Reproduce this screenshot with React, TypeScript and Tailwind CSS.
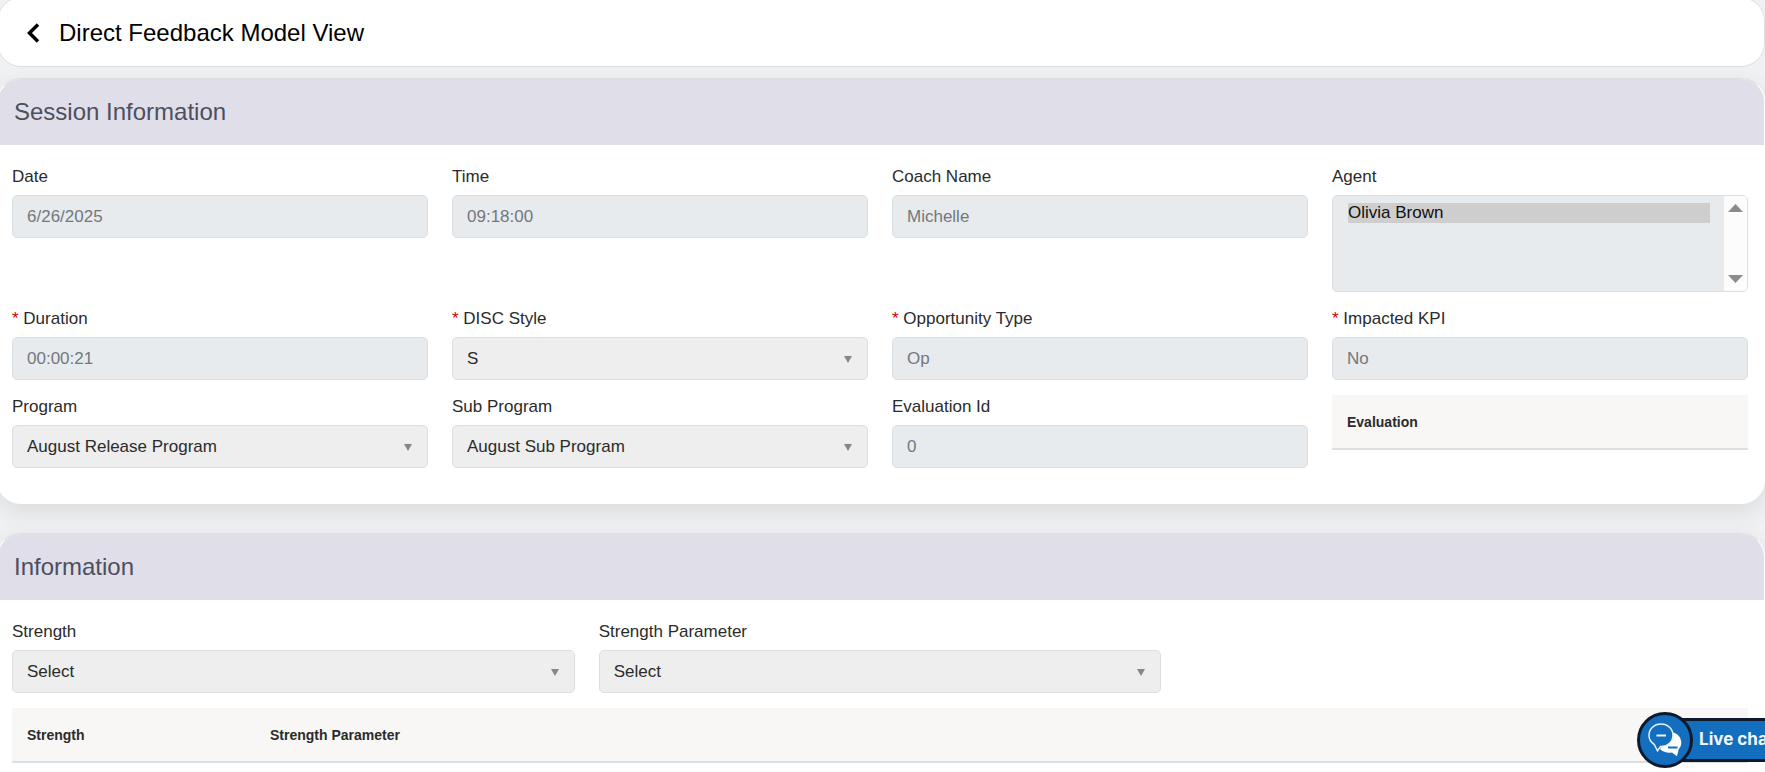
import { ReactNode } from "react"

const controlClass = "block h-[43px] w-full rounded-[5px] border border-[#d9dfe2] px-3.5"

function CaretDown() {
  return (
    <svg
      className="pointer-events-none absolute top-1/2 right-4 -mt-[3px]"
      width="8"
      height="7"
      viewBox="0 0 8 7"
      aria-hidden="true"
    >
      <path d="M0 0h8L4 7z" fill="#888888" />
    </svg>
  )
}

function Field({
  id,
  label,
  required = false,
  children,
}: {
  id: string
  label: string
  required?: boolean
  children: ReactNode
}) {
  return (
    <div>
      <label htmlFor={id} className="mb-1.5 block leading-6">
        {required && <span className="text-[#d90000]">* </span>}
        {label}
      </label>
      {children}
    </div>
  )
}

function TextField({
  id,
  label,
  value,
  required,
}: {
  id: string
  label: string
  value: string
  required?: boolean
}) {
  return (
    <Field id={id} label={label} required={required}>
      <input
        id={id}
        type="text"
        readOnly
        value={value}
        className={`${controlClass} bg-[#e7ebee] text-[#73787d] outline-none`}
      />
    </Field>
  )
}

function SelectField({
  id,
  label,
  options,
  required,
}: {
  id: string
  label: string
  options: string[]
  required?: boolean
}) {
  return (
    <Field id={id} label={label} required={required}>
      <div className="relative">
        <select id={id} className={`${controlClass} appearance-none bg-[#eeeeee] text-[#2b2b2b]`}>
          {options.map((option) => (
            <option key={option}>{option}</option>
          ))}
        </select>
        <CaretDown />
      </div>
    </Field>
  )
}

function AgentList({ agents }: { agents: string[] }) {
  return (
    <Field id="agent" label="Agent">
      <div className="flex h-[97px] overflow-hidden rounded-[5px] border border-[#d9dfe2] bg-[#e7ebee]">
        <select
          id="agent"
          multiple
          size={4}
          defaultValue={agents}
          className="min-w-0 flex-1 overflow-hidden py-[7px] pr-3.5 pl-[15px] text-[#101010] outline-none"
        >
          {agents.map((agent) => (
            <option key={agent} className="h-5 p-0 leading-5">
              {agent}
            </option>
          ))}
        </select>
        <div className="flex w-[23px] flex-col items-center justify-between bg-[#fcfcfc] py-2">
          <svg width="15" height="8" viewBox="0 0 15 8" aria-hidden="true">
            <path d="M7.5 0L15 8H0z" fill="#8b8b8b" />
          </svg>
          <svg width="15" height="8" viewBox="0 0 15 8" aria-hidden="true">
            <path d="M0 0h15L7.5 8z" fill="#8b8b8b" />
          </svg>
        </div>
      </div>
    </Field>
  )
}

function HeaderTable({ columns }: { columns: string[] }) {
  return (
    <table className="w-full border-collapse self-start">
      <thead>
        <tr className="h-[54px] border-b-2 border-[#d9dfe2] bg-[#f8f7f5] text-left text-sm">
          {columns.map((column, index) => (
            <th
              key={column}
              scope="col"
              className={`px-[15px] font-bold ${index < columns.length - 1 ? "w-[243px]" : ""}`}
            >
              {column}
            </th>
          ))}
        </tr>
      </thead>
    </table>
  )
}

function Panel({ title, children }: { title: string; children: ReactNode }) {
  return (
    <section className="overflow-hidden rounded-3xl border border-white border-t-[#dddde2] bg-white shadow-[0_8px_24px_rgba(0,0,0,0.09)]">
      <header className="flex h-[66px] items-center bg-[#e0dee8] px-4">
        <h2 className="text-2xl text-[#4d4f5e]">{title}</h2>
      </header>
      <div className="pt-5 pr-4 pb-[35px] pl-3.5">{children}</div>
    </section>
  )
}

function LiveChatButton() {
  return (
    <button type="button" className="fixed right-[-28px] bottom-1 flex items-center" aria-label="Live chat">
      <span className="z-10 flex size-14 items-center justify-center rounded-full border-[3px] border-[#0c1a2b] bg-[#146ebe]">
        <svg width="34" height="34" viewBox="0 0 34 34" aria-hidden="true">
          <path
            d="M25 9.500c4.500 1.200 8.300 4.800 8.300 10 0 2.800-1 5-2.600 6.800l-1.700 7-5-3.800c-4.500.6-9-.3-12-3.500z"
            fill="white"
          />
          <path
            d="M13 1C6.300 1 1 5.900 1 12.300c0 4.200 2.300 7.300 5.300 9.200l3.200 6.300 3-4.300C19.500 24 25 19 25 12.300 25 5.900 19.700 1 13 1z"
            fill="#146ebe"
            stroke="#e8f2fb"
            strokeWidth="1.500"
          />
          <path d="M8.500 12.500h9.500" stroke="#e8f2fb" strokeWidth="2" />
          <path d="M20 24.500h9.500" stroke="#146ebe" strokeWidth="2" />
        </svg>
      </span>
      <span className="-ml-3 flex h-11 items-center border-[3px] border-[#0c1a2b] bg-[#146ebe] pr-4 pl-[15px] font-['Inter',sans-serif] text-[17px] font-bold text-[#f3f8fc]">
        Live chat
      </span>
    </button>
  )
}

export default function App() {
  return (
    <div className="min-h-screen overflow-hidden bg-[#f0f1f3] font-['Liberation_Sans',Arial,sans-serif] text-[17px] text-[#2b2b2b]">
      <main className="-mt-[3px] -ml-[3px]">
        <header className="mb-[11px] flex h-[70px] items-center gap-[19px] rounded-3xl border border-[#d9dfe2] bg-white pt-0.5 pl-7">
          <button type="button" aria-label="Back">
            <svg width="14" height="20" viewBox="0 0 14 20" aria-hidden="true">
              <path d="M12 1.500L3.500 10l8.500 8.500" fill="none" stroke="black" strokeWidth="3.500" />
            </svg>
          </button>
          <h1 className="text-2xl text-black">Direct Feedback Model View</h1>
        </header>

        <div className="space-y-[29px]">
          <Panel title="Session Information">
            <div className="grid grid-cols-4 gap-x-6 gap-y-[15px]">
              <TextField id="date" label="Date" value="6/26/2025" />
              <TextField id="time" label="Time" value="09:18:00" />
              <TextField id="coach" label="Coach Name" value="Michelle" />
              <AgentList agents={["Olivia Brown"]} />
              <TextField id="duration" label="Duration" value="00:00:21" required />
              <SelectField id="disc" label="DISC Style" options={["S"]} required />
              <TextField id="opportunity" label="Opportunity Type" value="Op" required />
              <TextField id="kpi" label="Impacted KPI" value="No" required />
              <SelectField id="program" label="Program" options={["August Release Program"]} />
              <SelectField id="subProgram" label="Sub Program" options={["August Sub Program"]} />
              <TextField id="evaluationId" label="Evaluation Id" value="0" />
              <HeaderTable columns={["Evaluation"]} />
            </div>
          </Panel>

          <Panel title="Information">
            <div className="mb-[15px] grid grid-cols-3 gap-x-6">
              <SelectField id="strength" label="Strength" options={["Select"]} />
              <SelectField id="strengthParameter" label="Strength Parameter" options={["Select"]} />
            </div>
            <HeaderTable columns={["Strength", "Strength Parameter"]} />
          </Panel>
        </div>
      </main>
      <LiveChatButton />
    </div>
  )
}
